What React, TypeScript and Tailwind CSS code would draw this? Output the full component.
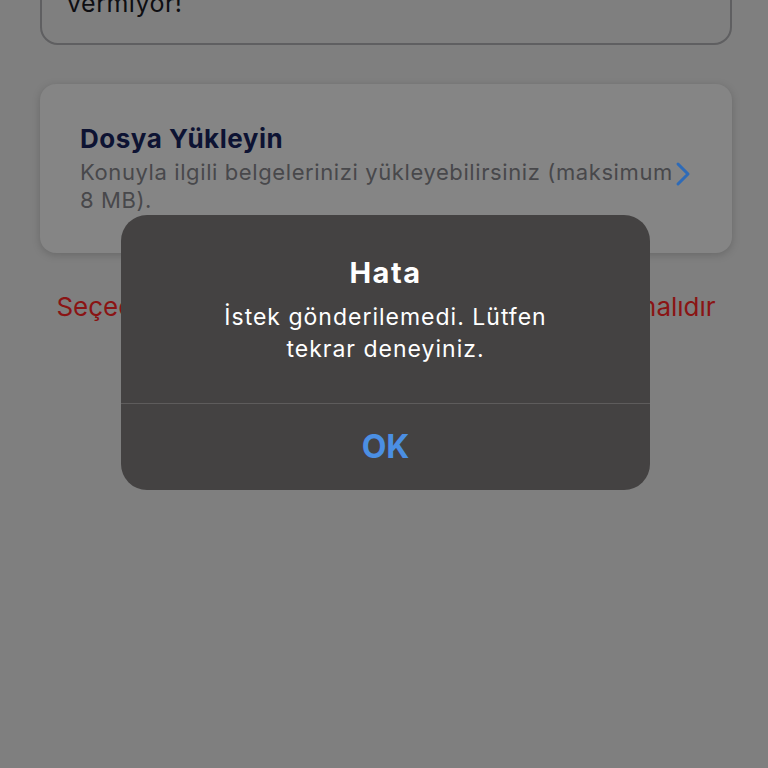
import React from "react";

export default function App() {
  return (
    <div
      className="relative w-[768px] h-[768px] overflow-hidden bg-[#7f7f7f]"
      style={{ fontFamily: "Inter, 'Noto Sans', sans-serif" }}
    >
      <div className="pl-[40px] pr-[36px]">
        <div className="-mt-[50px] h-[95px] rounded-[18px] border-[2px] border-[#5f5f61] px-[25px] pt-[36px]">
          <div className="text-[25px] leading-[30px] text-[#0e0e12] tracking-[0.5px]">vermiyor!</div>
        </div>

        <div className="mt-[39px] h-[169px] rounded-[16px] bg-[#858585] shadow-[0_2px_8px_rgba(0,0,0,0.18)] pl-[40px] pr-[36px] pt-[39px]">
          <div className="text-[26px] leading-[32px] font-bold text-[#0d1333] tracking-[0.5px]">Dosya Yükleyin</div>
          <div className="mt-[3px] flex items-start">
            <div className="text-[22px] leading-[28px] text-[#48484b] tracking-[0.6px] whitespace-nowrap">
              Konuyla ilgili belgelerinizi yükleyebilirsiniz (maksimum
              <br />8 MB).
            </div>
            <svg className="ml-[2px] mt-[3px] shrink-0" width="16" height="26" viewBox="0 0 16 26">
              <path d="M3 3 L13 13 L3 23" fill="none" stroke="#2e6bb8" strokeWidth="3" strokeLinecap="round" strokeLinejoin="round" />
            </svg>
          </div>
        </div>

        <div className="mt-[38px] text-center text-[26px] leading-[32px] text-[#8a1414] whitespace-nowrap">
          Seçeceğiniz alanlardan en az birinin seçilmiş olmalıdır
        </div>
      </div>

      <div className="absolute left-[121px] top-[215px] w-[529px] h-[275px] rounded-[26px] bg-[#444242] flex flex-col">
        <div className="h-[188px] flex flex-col items-center pt-[40px]">
          <div className="text-[29px] leading-[36px] font-bold text-white tracking-[1.5px]">Hata</div>
          <div className="mt-[10px] text-[23px] leading-[32px] text-white text-center tracking-[1px]">
            İstek gönderilemedi. Lütfen
            <br />tekrar deneyiniz.
          </div>
        </div>
        <div className="h-px bg-[#5e5c5c]" />
        <div className="flex-1 flex items-center justify-center">
          <div className="text-[32px] font-bold text-[#4b8fe3] leading-[36px]">OK</div>
        </div>
      </div>
    </div>
  );
}
